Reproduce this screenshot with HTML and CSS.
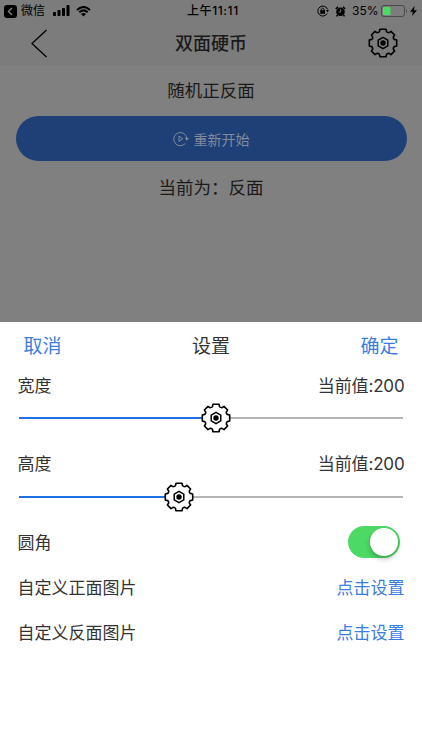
FILE: index.html
```
<!DOCTYPE html>
<html lang="zh-CN">
<head>
<meta charset="utf-8">
<title>双面硬币</title>
<link rel="stylesheet" href="styles.css">
</head>
<body>
<svg class="defs" aria-hidden="true">
  <symbol id="gear" viewBox="-15 -15 30 30">
    <path d="M-3 -13.7H3L3.6 -11.2Q4.6 -10.2 6 -10.3L8 -11.6L11.6 -8L10.3 -6Q10.2 -4.6 11.2 -3.6L13.7 -3V3L11.2 3.6Q10.2 4.6 10.3 6L11.6 8L8 11.6L6 10.3Q4.6 10.2 3.6 11.2L3 13.7H-3L-3.6 11.2Q-4.6 10.2 -6 10.3L-8 11.6L-11.6 8L-10.3 6Q-10.2 4.6 -11.2 3.6L-13.7 3V-3L-11.2 -3.6Q-10.2 -4.6 -10.3 -6L-11.6 -8L-8 -11.6L-6 -10.3Q-4.6 -10.2 -3.6 -11.2Z" stroke="#000" stroke-width="1.6" stroke-linejoin="round"/>
    <path d="M0 -5.6L4.8 -2.8V2.8L0 5.6L-4.8 2.8V-2.8Z" fill="none" stroke="#000" stroke-width="1.5"/>
    <circle r="2.7" fill="#000"/>
  </symbol>
</svg>
<div class="page">
  <div class="top">
    <div class="status">
      <svg class="back-app" viewBox="0 0 13 13"><rect width="13" height="13" rx="3"/><path d="M8 3L4.5 6.5L8 10" fill="none" stroke="#7c7c7c" stroke-width="1.5"/></svg>
      <span class="app">微信</span>
      <svg class="signal" viewBox="0 0 17 12"><rect y="7" width="3" height="4" rx=".7"/><rect x="4.5" y="5" width="3" height="6" rx=".7"/><rect x="9" y="3" width="3" height="8" rx=".7"/><rect x="13.5" y="0" width="3" height="11" rx=".7"/></svg>
      <svg class="wifi" viewBox="0 0 15 11"><path d="M1 4Q7.5 -2 14 4M3.3 6.3Q7.5 2.5 11.7 6.3" fill="none" stroke="#000" stroke-width="2"/><path d="M5 8Q7.5 6 10 8L7.5 10.5Z"/></svg>
      <span class="time">上午11:11</span>
      <svg class="lock" viewBox="0 0 12 12"><path d="M10.2 8.5A5 5 0 1 1 10.5 4.2" fill="none" stroke="#000"/><path d="M9 5H12L10.5 7.3Z"/><rect x="3.2" y="5.2" width="4.8" height="3.6"/><path d="M4.2 5.5V4.2Q5.6 2 7 4.2V5.5" fill="none" stroke="#000" stroke-width=".9"/></svg>
      <svg class="alarm" viewBox="0 0 11 11"><circle cx="5.5" cy="5.8" r="4.3"/><path d="M.8 3L3 .8M8 .8L10.2 3M2.5 9L1.5 10.4M8.5 9L9.5 10.4" stroke="#000" stroke-width="1.5"/><path d="M5.7 3V6H3.5" fill="none" stroke="#7c7c7c" stroke-width=".9"/></svg>
      <span class="percent">35%</span>
      <svg class="battery" viewBox="0 0 27 12"><rect x=".5" y=".5" width="23" height="11" rx="2.5" fill="none" stroke="#4a4a4a"/><rect x="2" y="2" width="7.5" height="8" rx="1" fill="#4cd964"/><path d="M25 4Q27 6 25 8Z" fill="#4a4a4a"/></svg>
      <svg class="bolt" viewBox="0 0 7 10"><path d="M4.5 0L0 5.7H2.8L2 10L7 4.2H4Z"/></svg>
    </div>
    <div class="nav">
      <svg class="chevron" viewBox="0 0 17 29"><path d="M15.5 1L1 14.5L15.5 28" fill="none" stroke="#000" stroke-width="1.3"/></svg>
      <h1>双面硬币</h1>
      <svg class="gear" fill="none"><use href="#gear"/></svg>
    </div>
  </div>
  <div class="content">
    <p>随机正反面</p>
    <div class="restart">
      <svg viewBox="0 0 16 16"><path d="M12.2 12.6A6.6 6.6 0 1 1 13.9 7.5" fill="none" stroke="#808b9c"/><path d="M11.8 7H16L13.9 9.7Z" fill="#808b9c"/><path d="M6 5.2V10.4L9.8 7.8Z" fill="none" stroke="#808b9c"/></svg>
      <span>重新开始</span>
    </div>
    <p class="result">当前为：反面</p>
  </div>
</div>
<div class="sheet">
  <div class="sheet-head"><span class="link">取消</span><span>设置</span><span class="link">确定</span></div>
  <div class="row"><span>宽度</span><span class="value">当前值:200</span></div>
  <div class="slider"><div class="fill width-fill"></div><svg class="gear" fill="#fff"><use href="#gear"/></svg><div class="rest"></div></div>
  <div class="row height-row"><span>高度</span><span class="value">当前值:200</span></div>
  <div class="slider"><div class="fill height-fill"></div><svg class="gear" fill="#fff"><use href="#gear"/></svg><div class="rest"></div></div>
  <div class="row switch-row"><span>圆角</span><div class="switch"><div class="knob"></div></div></div>
  <div class="row"><span>自定义正面图片</span><span class="link">点击设置</span></div>
  <div class="row"><span>自定义反面图片</span><span class="link">点击设置</span></div>
</div>
</body>
</html>
```
FILE: styles.css
```
* { box-sizing: border-box; }
body {
  margin: 0;
  width: 422px;
  height: 750px;
  overflow: hidden;
  background: #fff;
  color: #333;
  font-family: "Liberation Sans", "Noto Sans CJK SC", sans-serif;
  font-size: 17px;
}
svg { display: block; flex: none; }
.defs { display: none; }
.page { height: 322px; background: #808080; color: #1a1a1a; }
.top { height: 66px; background: #7c7c7c; }
.status {
  display: flex;
  align-items: center;
  height: 22px;
  padding-left: 4px;
  font-size: 12px;
  line-height: 22px;
  color: #000;
  white-space: nowrap;
}
.back-app { width: 13px; height: 13px; }
.app { width: 24px; margin-left: 4px; }
.signal { width: 17px; height: 12px; margin-left: 8px; }
.wifi { width: 15px; height: 11px; margin-left: 6px; }
.time {
  width: 53px;
  margin-left: 96px;
  font-weight: 500;
  font-family: Inter, "Noto Sans CJK SC", sans-serif;
  letter-spacing: .6px;
}
.lock { width: 12px; height: 12px; margin-left: 77px; }
.alarm { width: 11px; height: 11px; margin-left: 6px; }
.percent { width: 26px; margin-left: 6px; font-family: Inter, sans-serif; }
.battery { width: 27px; height: 12px; margin-left: 3px; }
.bolt { width: 7px; height: 10px; margin-left: 2px; }
.nav {
  display: flex;
  align-items: center;
  justify-content: space-between;
  height: 42px;
  padding: 0 24px 0 31px;
}
.chevron { width: 17px; height: 29px; }
.nav h1 { margin: -2px 0 0 6px; font-size: 18px; font-weight: 500; }
.gear { width: 30px; height: 30px; }
.content { padding: 0 15.5px; text-align: center; }
.content p { margin: 0; height: 50px; line-height: 51px; font-size: 17.5px; }
.content .result { height: 55px; line-height: 55px; }
.restart {
  display: flex;
  align-items: center;
  justify-content: center;
  gap: 5px;
  height: 45px;
  border-radius: 23px;
  background: #1e4077;
  color: #808b9c;
  font-size: 14px;
}
.restart svg { width: 16px; height: 16px; }
.sheet { height: 428px; padding: 0 17.5px; background: #fff; }
.sheet-head {
  display: flex;
  align-items: center;
  justify-content: space-between;
  height: 45px;
  padding: 0 6px;
  font-size: 19px;
}
.link { color: #3b7de0; }
.value { font-family: Inter, "Noto Sans CJK SC", sans-serif; letter-spacing: -.15px; }
.row { display: flex; align-items: center; justify-content: space-between; height: 45px; }
.sheet-head + .row { height: 34px; }
.height-row { height: 31px; margin: 12px 0 2px; }
.slider { display: flex; align-items: center; height: 34px; padding: 0 1.5px; }
.slider .gear { margin: 0 -1px; position: relative; }
.fill { height: 2px; background: #1f70e3; }
.width-fill { width: 182.5px; }
.height-fill { width: 146px; }
.rest { flex: 1; height: 2px; background: #b5b5b5; }
.switch-row { margin-top: 5px; }
.switch {
  display: flex;
  justify-content: flex-end;
  width: 52px;
  height: 32px;
  margin-right: 4.5px;
  padding: 2px;
  border-radius: 16px;
  background: #4cd964;
}
.knob { width: 28px; height: 28px; border-radius: 50%; background: #fff; box-shadow: 0 3px 5px rgba(0,0,0,.25); }
```
